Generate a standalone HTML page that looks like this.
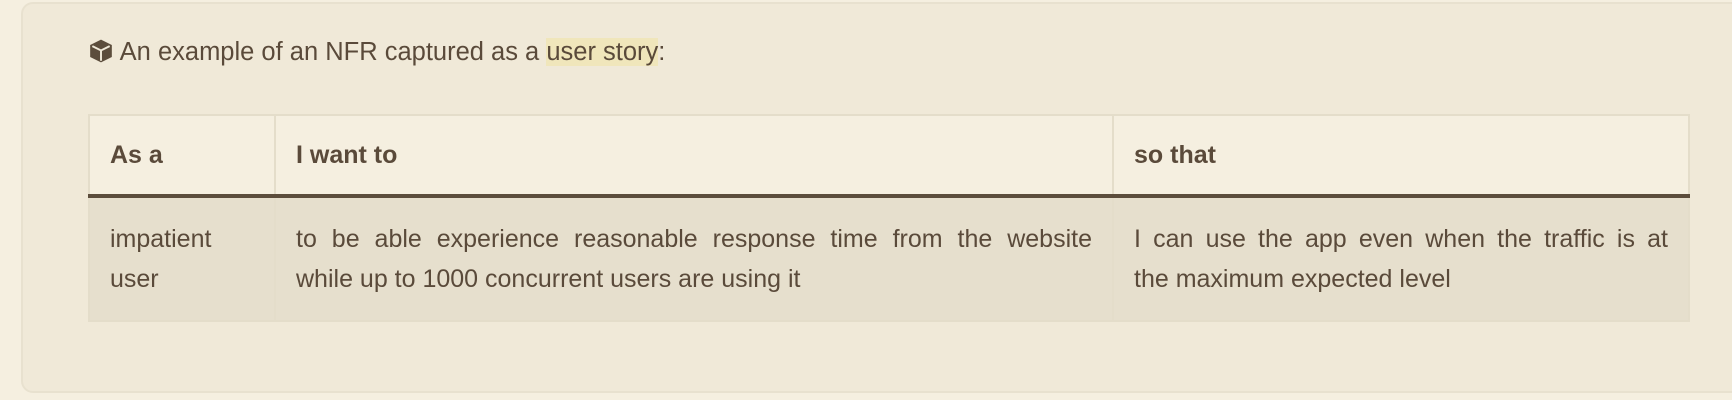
<!DOCTYPE html>
<html><head><meta charset="utf-8"><style>
html,body{margin:0;padding:0;width:1732px;height:400px;overflow:hidden;background:#f5efe0;font-family:"Liberation Sans",sans-serif;color:#5a4a3a;}
.card{position:absolute;left:21px;top:2px;width:1740px;height:391px;background:#f0e9d8;border:2px solid #e8e1cf;border-radius:12px;box-sizing:border-box;}
.p{position:absolute;left:88px;top:34px;font-size:25.5px;line-height:36px;white-space:nowrap;}
.hl{background:#f0e6bb;}
table{position:absolute;left:88px;top:114px;width:1602px;border-collapse:collapse;font-size:25px;}
th,td{border:2px solid #e4ddca;text-align:left;vertical-align:top;padding:0 20px;}
th{background:#f5efe0;height:78px;vertical-align:middle;font-weight:bold;border-bottom:4px solid #5c4d3c;}
td{background:#e6dfcd;line-height:40px;padding-top:21px;padding-bottom:21px;}
.j{display:block;text-align:justify;text-align-last:justify;white-space:nowrap;}
.n{display:block;white-space:nowrap;}
</style></head><body>
<div class="card"></div>
<div class="p"><svg width="26" height="26" viewBox="0 0 24 24" style="vertical-align:-4px"><path d="M12 1.5 L22 6.5 V17.5 L12 22.5 L2 17.5 V6.5 Z" fill="#5c4d3c"/><path d="M4 7.5 L12 11.5 L20 7.5" stroke="#f0e9d8" stroke-width="1.8" fill="none"/><path d="M12 11.5 V21" stroke="#f0e9d8" stroke-width="1.8"/></svg> An example of an NFR captured as a <span class="hl">user story</span>:</div>
<table>
<tr><th style="width:144px">As a</th><th style="width:796px">I want to</th><th>so that</th></tr>
<tr><td><span class="n">impatient</span><span class="n">user</span></td><td><span class="j">to be able experience reasonable response time from the website</span><span class="n">while up to 1000 concurrent users are using it</span></td><td><span class="j">I can use the app even when the traffic is at</span><span class="n">the maximum expected level</span></td></tr>
</table>
</body></html>
